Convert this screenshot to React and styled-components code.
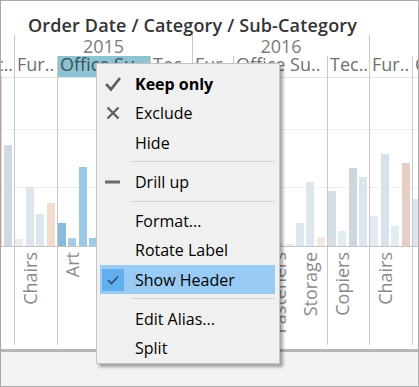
import styled, { createGlobalStyle } from 'styled-components';

const GlobalStyle = createGlobalStyle`
  html, body {
    margin: 0;
    padding: 0;
    background: #ffffff;
  }
  body {
    font-family: "Open Sans", "Noto Sans", "DejaVu Sans", sans-serif;
  }
`;

const Window = styled.div`
  position: relative;
  width: 419px;
  height: 387px;
  box-sizing: border-box;
  border: 1px solid #a9a9a9;
  background: #ffffff;
  display: flex;
  flex-direction: column;
  overflow: hidden;
`;

const Title = styled.div`
  flex: none;
  height: 34px;
  box-sizing: border-box;
  padding: 14px 0 0 27px;
  font-size: 18px;
  font-weight: 600;
  line-height: 21px;
  letter-spacing: 0.15px;
  color: #333333;
  white-space: nowrap;
`;

const Chart = styled.div`
  flex: none;
  display: flex;
  height: 310px;
`;

const YearGroup = styled.div`
  flex: none;
  width: ${(p) => p.$w}px;
  box-sizing: border-box;
  border-left: ${(p) => (p.$edge ? '1px solid #c8c8c8' : 'none')};
  display: flex;
  flex-direction: column;
  overflow: hidden;
`;

const YearLabel = styled.div`
  height: 21px;
  box-sizing: border-box;
  padding-top: 1px;
  line-height: 20px;
  font-size: 18px;
  color: #7b7b7b;
  text-align: center;
  white-space: nowrap;
`;

const CatRow = styled.div`
  flex: 1;
  display: flex;
  justify-content: ${(p) => (p.$end ? 'flex-end' : 'flex-start')};
`;

const Category = styled.div`
  flex: none;
  width: ${(p) => p.$w}px;
  box-sizing: border-box;
  border-left: ${(p) => (p.$edge ? '1px solid #c8c8c8' : 'none')};
  display: flex;
  flex-direction: column;
`;

const HeaderCell = styled.div`
  height: 22px;
  box-sizing: border-box;
  padding-left: 2px;
  border-bottom: 1px solid #e3e3e3;
  font-size: 18px;
  line-height: 17px;
  color: ${(p) => (p.$active ? '#3f4f57' : '#707070')};
  background: ${(p) => (p.$active ? '#8ec3d4' : 'transparent')};
  white-space: nowrap;
  overflow: hidden;
`;

const BarArea = styled.div`
  height: 169px;
  box-sizing: border-box;
  border-bottom: 1px solid #c6c6c6;
  display: flex;
  align-items: flex-end;
  background: linear-gradient(
    to bottom,
    transparent 51px,
    #efefef 51px,
    #efefef 52px,
    transparent 52px,
    transparent 109px,
    #efefef 109px,
    #efefef 110px,
    transparent 110px
  );
`;

const Slot = styled.div`
  flex: 1;
  display: flex;
  justify-content: center;
  align-items: flex-end;
  height: 100%;
`;

const Bar = styled.div`
  width: 8px;
  margin-right: 2px;
  height: ${(p) => p.$h}px;
  background: ${(p) => p.$c};
`;

const LabelRow = styled.div`
  flex: 1;
  display: flex;
`;

const LabelSlot = styled.div`
  flex: 1;
  display: flex;
  justify-content: center;
  align-items: flex-start;
  min-width: 0;
`;

const SubLabel = styled.span`
  writing-mode: vertical-rl;
  transform: rotate(180deg);
  margin-top: 5px;
  margin-right: 2px;
  font-size: 18px;
  line-height: 18px;
  color: #8a8a8a;
  white-space: nowrap;
`;

const Spacer = styled.div`
  flex: none;
  height: 4px;
`;

const Rule = styled.div`
  flex: none;
  height: 3px;
  background: #b6b6b6;
`;

const Footer = styled.div`
  flex: 1;
  background: #f3f3f3;
`;

const Menu = styled.div`
  position: absolute;
  left: 95px;
  top: 62px;
  width: 184px;
  box-sizing: border-box;
  padding-top: 5.5px;
  background: #f0f0f0;
  border: 1px solid #c4c4c4;
  box-shadow: 3px 3px 3px rgba(0, 0, 0, 0.35);
  font-size: 16px;
  color: #000000;
`;

const MenuItem = styled.div`
  height: 29.25px;
  margin: 0 4px 0 3px;
  padding-left: 2px;
  display: flex;
  align-items: center;
  white-space: nowrap;
  background: ${(p) => (p.$active ? '#99cbf5' : 'transparent')};
  font-weight: ${(p) => (p.$bold ? 700 : 400)};
`;

const IconBox = styled.span`
  flex: none;
  width: 22px;
  height: 22px;
  margin-right: 11px;
  display: flex;
  align-items: center;
  justify-content: center;
  background: ${(p) => (p.$box ? '#62aff0' : 'transparent')};
`;

const Separator = styled.div`
  height: 1px;
  margin: 4px 4px 5px 34px;
  background: #d2d2d2;
`;

const b = (h, c, label) => ({ h, c, label });

const years = [
  {
    key: '2014',
    label: '',
    width: 13,
    edge: false,
    end: true,
    cats: [
      {
        name: 'Tec..',
        width: 41,
        edge: false,
        bars: [b(40, '#e3e9ef'), b(20, '#e3e9ef'), b(170, '#e8cfc6'), b(101, '#d1dae3')],
      },
    ],
  },
  {
    key: '2015',
    label: '2015',
    width: 178,
    edge: true,
    cats: [
      {
        name: 'Fur..',
        width: 42,
        edge: false,
        bars: [b(7, '#ebebeb'), b(59, '#dde5ee', 'Chairs'), b(32, '#dbe6ee'), b(43, '#f2dccf')],
      },
      {
        name: 'Office Su..',
        width: 93,
        edge: true,
        active: true,
        bars: [
          b(23, '#88bbde'),
          b(8, '#a9cde0', 'Art'),
          b(79, '#9dc8e4'),
          b(8, '#9fcbe5'),
          b(12, '#9fcbe5'),
          b(30, '#9dc8e4'),
          b(60, '#88bbde'),
          b(90, '#88bbde'),
          b(20, '#a9cde0'),
        ],
      },
      {
        name: 'Tec..',
        width: 42,
        edge: true,
        bars: [b(60, '#d6dfe8'), b(20, '#e2ebf0'), b(70, '#cdd6e0'), b(80, '#dbe5ec')],
      },
    ],
  },
  {
    key: '2016',
    label: '2016',
    width: 177,
    edge: true,
    cats: [
      {
        name: 'Fur..',
        width: 40,
        edge: false,
        bars: [b(30, '#e3eaf1'), b(85, '#d6e2ec'), b(25, '#e2ebf0'), b(70, '#e7cfc8')],
      },
      {
        name: 'Office Su..',
        width: 94,
        edge: true,
        bars: [
          b(20, '#dde6ee'),
          b(6, '#e2ebf0'),
          b(40, '#dde6ee'),
          b(8, '#e2ebf0'),
          b(3, '#ececec', 'Fasteners'),
          b(2, '#ececec'),
          b(23, '#dde6ee'),
          b(64, '#dde6ee', 'Storage'),
          b(9, '#f3e9e1'),
        ],
      },
      {
        name: 'Tec..',
        width: 42,
        edge: true,
        bars: [b(55, '#d6dfe8'), b(15, '#e2ebf0', 'Copiers'), b(78, '#cdd6e0'), b(69, '#dbe5ec')],
      },
    ],
  },
  {
    key: '2017',
    label: '',
    width: 49,
    edge: true,
    cats: [
      {
        name: 'Fur..',
        width: 42,
        edge: false,
        bars: [b(30, '#e3eaf1'), b(92, '#d6e2ec', 'Chairs'), b(20, '#e2ebf0'), b(83, '#e7cfc8')],
      },
      {
        name: 'Office Su..',
        width: 94,
        edge: true,
        bars: [
          b(47, '#dde6ee'),
          b(10, '#e2ebf0'),
          b(50, '#dde6ee'),
          b(12, '#e2ebf0'),
          b(4, '#ececec'),
          b(20, '#dde6ee'),
          b(30, '#dde6ee'),
          b(70, '#dde6ee'),
          b(10, '#f3e9e1'),
        ],
      },
    ],
  },
];

function CheckIcon() {
  return (
    <svg width="16" height="16" viewBox="0 0 16 16">
      <path d="M1.2 8.2 L6 13.4 L15 2" fill="none" stroke="#5a5a5a" strokeWidth="2.6" />
    </svg>
  );
}

function CrossIcon() {
  return (
    <svg width="16" height="16" viewBox="0 0 16 16">
      <path d="M2.5 2.5 L13.5 13.5 M13.5 2.5 L2.5 13.5" fill="none" stroke="#5f6368" strokeWidth="2.4" />
    </svg>
  );
}

function MinusIcon() {
  return (
    <svg width="16" height="16" viewBox="0 0 16 16">
      <rect x="0" y="6.5" width="15" height="3" fill="#6b6b6b" />
    </svg>
  );
}

function SmallCheck() {
  return (
    <svg width="12" height="10" viewBox="0 0 12 10">
      <path d="M1 5 L4.5 8.5 L11 1.5" fill="none" stroke="#2d4866" strokeWidth="1.6" />
    </svg>
  );
}

const menu = [
  { label: 'Keep only', icon: <CheckIcon />, bold: true },
  { label: 'Exclude', icon: <CrossIcon /> },
  { label: 'Hide' },
  'sep',
  { label: 'Drill up', icon: <MinusIcon /> },
  'sep',
  { label: 'Format...' },
  { label: 'Rotate Label' },
  { label: 'Show Header', icon: <SmallCheck />, active: true },
  'sep',
  { label: 'Edit Alias...' },
  { label: 'Split' },
];

function CategoryColumn({ cat }) {
  return (
    <Category $w={cat.width} $edge={cat.edge}>
      <HeaderCell $active={cat.active}>{cat.name}</HeaderCell>
      <BarArea>
        {cat.bars.map((bar, i) => (
          <Slot key={i}>
            <Bar $h={bar.h} $c={bar.c} />
          </Slot>
        ))}
      </BarArea>
      <LabelRow>
        {cat.bars.map((bar, i) => (
          <LabelSlot key={i}>{bar.label && <SubLabel>{bar.label}</SubLabel>}</LabelSlot>
        ))}
      </LabelRow>
    </Category>
  );
}

export default function App() {
  return (
    <>
      <GlobalStyle />
      <Window>
        <Title>Order Date / Category / Sub-Category</Title>
        <Chart>
          {years.map((y) => (
            <YearGroup key={y.key} $w={y.width} $edge={y.edge}>
              <YearLabel>{y.label}</YearLabel>
              <CatRow $end={y.end}>
                {y.cats.map((cat, i) => (
                  <CategoryColumn key={i} cat={cat} />
                ))}
              </CatRow>
            </YearGroup>
          ))}
        </Chart>
        <Spacer />
        <Rule />
        <Footer />
        <Menu>
          {menu.map((item, i) =>
            item === 'sep' ? (
              <Separator key={i} />
            ) : (
              <MenuItem key={i} $active={item.active} $bold={item.bold}>
                <IconBox $box={item.active}>{item.icon}</IconBox>
                {item.label}
              </MenuItem>
            )
          )}
        </Menu>
      </Window>
    </>
  );
}
